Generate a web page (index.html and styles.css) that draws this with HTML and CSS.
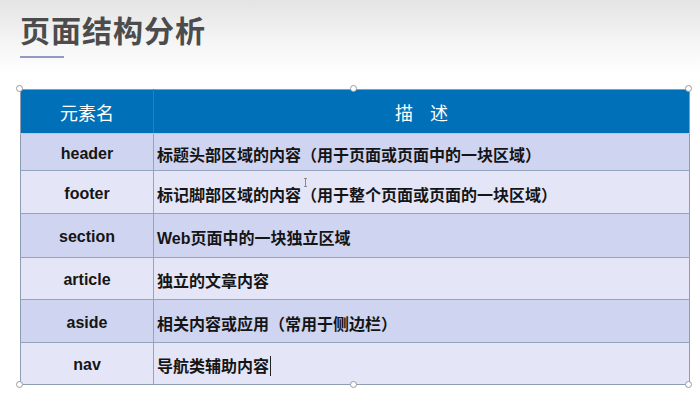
FILE: index.html
```html
<!DOCTYPE html>
<html lang="zh-CN">
<head>
<meta charset="utf-8">
<title>页面结构分析</title>
<link rel="stylesheet" href="styles.css">
</head>
<body>
<div class="slide">
  <h1 class="title">页面结构分析</h1>
  <div class="rule"></div>
  <div class="table-wrap">
    <table class="grid">
      <thead>
        <tr class="head"><th class="c1">元素名</th><th class="c2">描<span class="sp"></span>述</th></tr>
      </thead>
      <tbody>
        <tr class="r odd h37"><td class="c1">header</td><td class="c2">标题头部区域的内容（用于页面或页面中的一块区域）</td></tr>
        <tr class="r even h43"><td class="c1">footer</td><td class="c2">标记脚部区域的内容（用于整个页面或页面的一块区域）</td></tr>
        <tr class="r odd h44"><td class="c1">section</td><td class="c2"><span class="lat">Web</span>页面中的一块独立区域</td></tr>
        <tr class="r even h42"><td class="c1">article</td><td class="c2">独立的文章内容</td></tr>
        <tr class="r odd h43"><td class="c1">aside</td><td class="c2">相关内容或应用（常用于侧边栏）</td></tr>
        <tr class="r even h42"><td class="c1">nav</td><td class="c2">导航类辅助内容<span class="caret"></span></td></tr>
      </tbody>
    </table>
    <span class="handle tl"></span>
    <span class="handle tm"></span>
    <span class="handle tr"></span>
    <span class="handle bl"></span>
    <span class="handle bm"></span>
    <span class="handle br"></span>
    <span class="ibeam"></span>
  </div>
</div>
</body>
</html>
```
FILE: styles.css
```css
html, body {
  margin: 0;
  padding: 0;
}
body {
  width: 700px;
  height: 397px;
  overflow: hidden;
  background: linear-gradient(to bottom, #e4e4e4 0px, #f6f6f6 45px, #ffffff 75px, #ffffff 100%);
  font-family: "Liberation Sans", "Noto Sans CJK SC", sans-serif;
}
.slide {
  padding: 14px 0 0 20px;
}
.title {
  margin: 0;
  font-family: "Noto Sans CJK SC", sans-serif;
  font-weight: 700;
  font-size: 30px;
  line-height: 30px;
  color: #4c4c4c;
  letter-spacing: 1px;
}
.rule {
  width: 44px;
  height: 2px;
  margin-top: 12px;
  background: #8e9cc2;
}
.table-wrap {
  position: relative;
  margin-top: 31px;
  width: 670px;
}
.grid {
  width: 670px;
  border-collapse: collapse;
  table-layout: fixed;
  border: 1px solid #8d9cb0;
}
.grid th, .grid td {
  padding: 0;
}
.c1 {
  width: 132px;
  text-align: center;
}
.head {
  height: 44px;
  background: #0071b8;
}
.head th {
  color: #ffffff;
  font-family: "Noto Sans CJK SC", sans-serif;
  font-weight: 400;
  font-size: 18px;
  border-bottom: 1px solid #b9c6e6;
}
.head th.c1 {
  border-right: 1px solid #2a7fbf;
}
.head th.c2 {
  text-align: center;
}
.sp {
  display: inline-block;
  width: 17px;
}
.r td {
  border-top: 1px solid #94a4bc;
  color: #151515;
  font-weight: 700;
  padding-top: 3px;
}
.r td.c1 {
  font-size: 16px;
  border-right: 1px solid #94a4bc;
}
.r td.c2 {
  font-family: "Noto Sans CJK SC", sans-serif;
  font-size: 16px;
  padding-left: 3px;
  text-align: left;
  white-space: nowrap;
}
.lat {
  font-family: "Liberation Sans", sans-serif;
}
.odd { background: #cfd4f1; }
.even { background: #e4e6f8; }
.h37 { height: 37px; }
.h42 { height: 42px; }
.h43 { height: 43px; }
.h44 { height: 44px; }

.caret {
  display: inline-block;
  width: 1px;
  height: 20px;
  background: #222;
  vertical-align: -4px;
  margin-left: 1px;
}
.handle {
  position: absolute;
  width: 7px;
  height: 7px;
  border-radius: 50%;
  background: #ffffff;
  border: 1px solid #9a9a9a;
  box-sizing: border-box;
}
.tl { left: -4px; top: -4px; }
.tm { left: 330px; top: -4px; }
.tr { left: 665px; top: -4px; }
.bl { left: -4px; bottom: -3px; }
.bm { left: 330px; bottom: -3px; }
.br { left: 665px; bottom: -3px; }
.ibeam {
  position: absolute;
  left: 285px;
  top: 89px;
  width: 1px;
  height: 9px;
  background: #8a8a8a;
}
.ibeam::before, .ibeam::after {
  content: "";
  position: absolute;
  left: -1px;
  width: 3px;
  height: 1px;
  background: #8a8a8a;
}
.ibeam::before { top: 0; }
.ibeam::after { bottom: 0; }
```
